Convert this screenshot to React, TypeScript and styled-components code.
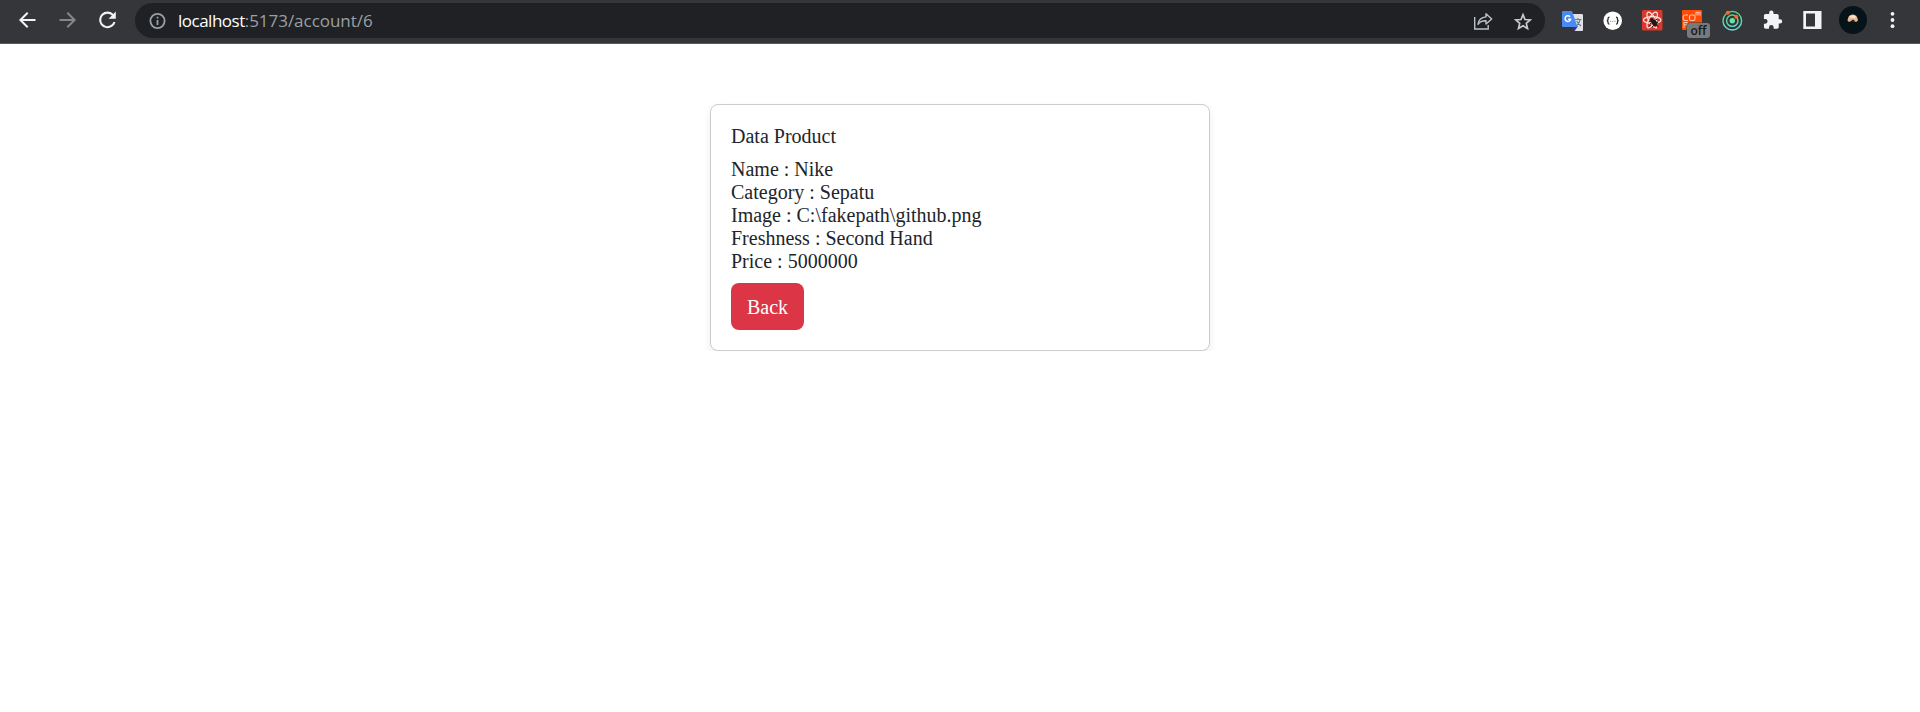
import React from "react";
import styled, { createGlobalStyle } from "styled-components";

const GlobalStyle = createGlobalStyle`
  *, *::before, *::after { box-sizing: border-box; }
  body {
    margin: 0;
    background: #fff;
    color: #212529;
    font-family: "Liberation Serif", "Times New Roman", serif;
    font-size: 20px;
    line-height: 23px;
  }
`;

const Toolbar = styled.header`
  display: flex;
  align-items: flex-start;
  height: 44px;
  padding: 0 7px;
  background: #35363a;
  border-bottom: 1px solid #5a5a5e;
`;

const Icon = styled.svg`
  display: block;
  flex: none;
  width: 40px;
  height: 40px;
`;

const AddressBar = styled.div`
  display: flex;
  flex: none;
  align-items: center;
  width: 1410px;
  height: 35px;
  margin: 3px 8px 0 8px;
  padding: 0 2px;
  border-radius: 18px;
  background: #202124;
`;

const Url = styled.span`
  flex: 1;
  margin-left: 1px;
  color: #9aa0a6;
  font-family: "Segoe UI", "Open Sans", "Noto Sans", sans-serif;
  font-size: 17px;
  line-height: 35px;
  letter-spacing: -0.03px;
`;

const Host = styled.span`
  color: #fff;
  letter-spacing: -0.5px;
`;

const Page = styled.main`
  display: flex;
  justify-content: center;
  padding-top: 60px;
`;

const Card = styled.section`
  display: flex;
  flex-direction: column;
  align-items: flex-start;
  gap: 10px;
  width: 500px;
  padding: 20px;
  border: 1px solid #ccc;
  border-radius: 8px;
  background: #fff;
  box-shadow: 0 4px 8px rgba(0, 0, 0, 0.08);
`;

const Title = styled.div``;

const Details = styled.div`
  display: flex;
  flex-direction: column;
`;

const Field = styled.span``;

const BackButton = styled.button`
  height: 47px;
  padding: 2px 16px 0;
  border: 0;
  border-radius: 8px;
  background: #dc3545;
  color: #fff;
  font: inherit;
`;

const fields = [
  ["Name", "Nike"],
  ["Category", "Sepatu"],
  ["Image", "C:\\fakepath\\github.png"],
  ["Freshness", "Second Hand"],
  ["Price", "5000000"],
];

function BackIcon() {
  return (
    <Icon viewBox="0 0 40 40">
      <path d="M28.5 20H13.8M20.7 12.7 13.4 20l7.3 7.3" fill="none" stroke="#f1f3f4" strokeWidth="2" />
    </Icon>
  );
}

function ForwardIcon() {
  return (
    <Icon viewBox="0 0 40 40">
      <path d="M12.5 20h14.7M20.3 12.7l7.3 7.3-7.3 7.3" fill="none" stroke="#85868a" strokeWidth="2" />
    </Icon>
  );
}

function ReloadIcon() {
  return (
    <Icon viewBox="0 0 40 40">
      <path
        transform="translate(8 7.4) scale(1.04)"
        fill="#f1f3f4"
        d="M17.65 6.35A7.96 7.96 0 0 0 12 4a8 8 0 1 0 7.73 10h-2.08A6 6 0 1 1 12 6c1.66 0 3.14.69 4.22 1.78L13 11h7V4z"
      />
    </Icon>
  );
}

function InfoIcon() {
  return (
    <Icon viewBox="0 0 40 40">
      <circle cx="20.5" cy="20" r="7.1" fill="none" stroke="#9aa0a6" strokeWidth="1.8" />
      <path d="M19.6 19h1.8v5h-1.8zM19.6 15.7h1.8v1.8h-1.8z" fill="#9aa0a6" />
    </Icon>
  );
}

function ShareIcon() {
  return (
    <Icon viewBox="0 0 40 40" fill="none" stroke="#bdc1c6" strokeWidth="1.4">
      <path d="M11.7 16v12h13.5v-4" />
      <path d="M23 12.8 28.7 18 23 23v-3.2c-3.7-.2-6 .9-8 3.5.6-4.3 3.2-7 8-7.4z" strokeLinejoin="round" />
    </Icon>
  );
}

function StarIcon() {
  return (
    <Icon viewBox="0 0 40 40">
      <path
        d="m20 13.7 2 4.8 5.2.5-3.9 3.4 1.2 5.1-4.5-2.7-4.5 2.7 1.2-5.1-3.9-3.4 5.2-.5z"
        fill="none"
        stroke="#c8cace"
        strokeWidth="1.7"
      />
    </Icon>
  );
}

function TranslateIcon() {
  return (
    <Icon viewBox="0 0 40 40">
      <path d="M18 14h11q1 0 1 1v15q0 1-1 1h-7z" fill="#dfe1e5" />
      <path d="M19 26h6l-3 4.500z" fill="#3027c9" />
      <path d="M10 11h9l5.500 16H10.500q-1.500 0-1.500-1.500V12q0-1 1-1z" fill="#4a8af4" />
      <path d="M17 16.800a2.800 2.800 0 1 0 .6 2.400h-2.400" fill="none" stroke="#fff" strokeWidth="1.500" />
      <path d="M22 19.500h6.500M25 18v1.500m2.200 0q-.7 4-4 6.500m.5-5q1.500 3 4.300 5" fill="none" stroke="#607d85" strokeWidth="1.200" />
    </Icon>
  );
}

function JsonIcon() {
  return (
    <Icon viewBox="0 0 40 40">
      <circle cx="19.700" cy="20.700" r="9.300" fill="#fff" />
      <path
        d="M16.500 17.200q-1.500 0-1.500 1.500v.8q0 1.200-1.200 1.200 1.200 0 1.200 1.200v.8q0 1.500 1.500 1.500M23 17.200q1.500 0 1.500 1.500v.8q0 1.200 1.200 1.200-1.200 0-1.200 1.200v.8q0 1.500-1.500 1.500"
        fill="none"
        stroke="#292929"
        strokeWidth="1.300"
      />
      <path d="M17 21.300h1.100m1.100 0h1.100m1.100 0h1.100" stroke="#888" strokeWidth="1" />
    </Icon>
  );
}

function ReactDebugIcon() {
  return (
    <Icon viewBox="0 0 40 40">
      <rect x="9" y="10" width="20.500" height="20.500" rx="1.500" fill="#d9382d" />
      <g fill="none" stroke="#fbe3df" strokeWidth="1.200">
        <ellipse cx="19.200" cy="20" rx="8.800" ry="3.400" />
        <ellipse cx="19.200" cy="20" rx="8.800" ry="3.400" transform="rotate(60 19.200 20)" />
        <ellipse cx="19.200" cy="20" rx="8.800" ry="3.400" transform="rotate(120 19.200 20)" />
      </g>
      <ellipse cx="21.500" cy="23" rx="2.500" ry="3.500" transform="rotate(-35 21.500 23)" fill="#211817" />
      <circle cx="18.700" cy="19.700" r="1.600" fill="#211817" />
      <path d="m17 24 7-5m-5 8 6-5m-6-1-3 .5m8 3 1 3m-7-3-2 2" stroke="#211817" strokeWidth="1" />
    </Icon>
  );
}

const BadgedIcon = styled.div`
  position: relative;
  flex: none;
  width: 40px;
  height: 40px;
  padding: 10px 0 0 9px;
`;

const Badge = styled.span`
  position: absolute;
  left: 14px;
  top: 23px;
  width: 23px;
  height: 15px;
  border-radius: 3px;
  background: #78797b;
  box-shadow: 0 0 0 0.5px #35363a;
  color: #17181b;
  font: 600 12px/16px "Open Sans", sans-serif;
  text-align: center;
`;

const OrangeTile = styled.div`
  width: 20px;
  height: 20px;
  border-radius: 1px;
  background: #ff4b05;
`;

function BadgedExtension() {
  return (
    <BadgedIcon>
      <OrangeTile>
        <svg width="20" height="20" viewBox="0 0 20 20" fill="none" stroke="#ffc5ad" strokeWidth="1.100">
          <path d="M6 5H3.200Q1.200 5 1.200 7v1.500q0 2 2 2H6" />
          <rect x="7.500" y="5" width="5.500" height="5.500" rx="1.800" />
          <path d="M14 5.500V2.300h2v3.200m0-3.200h2v3.200M2 18v-5.500h3.200v2.200H2m3.200 0V18" />
        </svg>
      </OrangeTile>
      <Badge>off</Badge>
    </BadgedIcon>
  );
}

function RadarIcon() {
  return (
    <Icon viewBox="0 0 40 40">
      <defs>
        <linearGradient id="radar" x1="0" y1="0" x2="0" y2="1">
          <stop stopColor="#52dc82" />
          <stop offset="1" stopColor="#64ddcf" />
        </linearGradient>
      </defs>
      <circle cx="19.300" cy="20.700" r="9.300" fill="none" stroke="url(#radar)" strokeWidth="1.400" />
      <circle cx="19.300" cy="20.700" r="5.700" fill="none" stroke="url(#radar)" strokeWidth="1.400" />
      <circle cx="19.300" cy="20.700" r="2.700" fill="#60e5a6" />
      <circle cx="14.800" cy="12.700" r="2" fill="#ff6628" />
      <circle cx="23.300" cy="16.700" r="2" fill="#ff6628" />
    </Icon>
  );
}

function PuzzleIcon() {
  return (
    <Icon viewBox="0 0 40 40">
      <path
        transform="translate(9.200 9.600) scale(.87)"
        fill="#f1f3f4"
        d="M20.500 11H19V7c0-1.100-.9-2-2-2h-4V3.500a2.500 2.500 0 0 0-5 0V5H4c-1.100 0-2 .9-2 2v3.800h1.500a2.700 2.700 0 0 1 0 5.400H2V20c0 1.100.9 2 2 2h3.800v-1.500a2.700 2.700 0 0 1 5.400 0V22H17c1.100 0 2-.9 2-2v-4h1.500a2.500 2.500 0 0 0 0-5z"
      />
    </Icon>
  );
}

function SidePanelIcon() {
  return (
    <Icon viewBox="0 0 40 40">
      <path fill="#f1f3f4" fillRule="evenodd" d="M10.300 11h18.200v18H10.300zM13 13.500v13h9v-13z" />
    </Icon>
  );
}

function AvatarIcon() {
  return (
    <Icon viewBox="0 0 40 40">
      <circle cx="20" cy="20" r="14" fill="#06141a" />
      <path d="M14.500 20.500q.5-6 5.200-6t5.300 6l-2 1.500-2-1h-3L16 22z" fill="#e9b995" />
      <path d="M16 17q3.500-3 7-.5l-1 2-3-.8z" fill="#ffe2c7" />
      <path d="m18.500 20.500.7-.7h1.600l.7.7v1.500h-3z" fill="#332723" />
    </Icon>
  );
}

function MenuIcon() {
  return (
    <Icon viewBox="0 0 40 40" fill="#f1f3f4">
      <circle cx="19.500" cy="13.800" r="1.900" />
      <circle cx="19.500" cy="20" r="1.900" />
      <circle cx="19.500" cy="26.200" r="1.900" />
    </Icon>
  );
}

export default function App() {
  return (
    <>
      <GlobalStyle />
      <Toolbar>
        <BackIcon />
        <ForwardIcon />
        <ReloadIcon />
        <AddressBar>
          <InfoIcon />
          <Url>
            <Host>localhost</Host>:5173/account/6
          </Url>
          <ShareIcon />
          <StarIcon />
        </AddressBar>
        <TranslateIcon />
        <JsonIcon />
        <ReactDebugIcon />
        <BadgedExtension />
        <RadarIcon />
        <PuzzleIcon />
        <SidePanelIcon />
        <AvatarIcon />
        <MenuIcon />
      </Toolbar>
      <Page>
        <Card>
          <Title>Data Product</Title>
          <Details>
            {fields.map(([label, value]) => (
              <Field key={label}>{`${label} : ${value}`}</Field>
            ))}
          </Details>
          <BackButton>Back</BackButton>
        </Card>
      </Page>
    </>
  );
}
